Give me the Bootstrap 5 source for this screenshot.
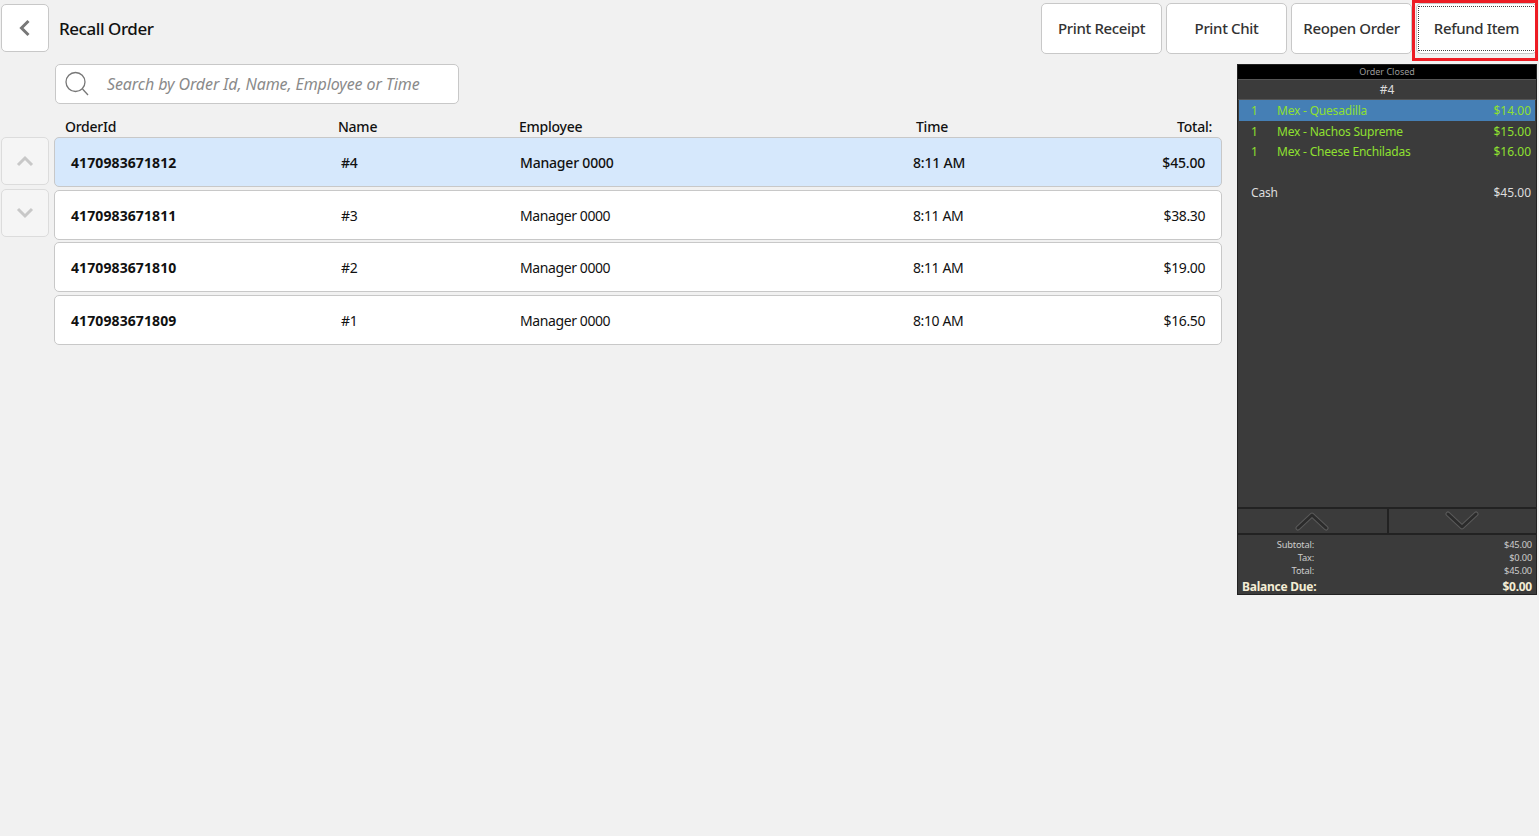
<!DOCTYPE html>
<html lang="en">
<head>
    <meta charset="UTF-8">
    <meta name="viewport" content="width=device-width, initial-scale=1.0">
    <link href="https://cdn.jsdelivr.net/npm/bootstrap@5.3.0/dist/css/bootstrap.min.css" rel="stylesheet">
    <title>Recall Order</title>
    <style>
        html, body { height: 100%; }
        body { background: #f1f1f1; font-family: "Noto Sans", "Open Sans", sans-serif; color: #111; overflow: hidden; }
        .top-bar { height: 64px; padding: 3px 2px 0 1px; }
        .tile { background: #fff; border: 1px solid #c8c8c8; border-radius: 5px; }
        .back-btn { width: 48px; height: 48px; margin-top: 1px; }
        .page-title { font-size: 17px; margin-left: 10px; margin-top: -9px; letter-spacing: -.45px; font-weight: 500; }
        .act-btn { width: 121px; height: 51px; font-size: 15px; color: #333; letter-spacing: -.35px; font-weight: 500; padding: 0 0 1px; }
        .act-btn.focused { position: relative; }
        .act-btn.focused::before { content: ""; position: absolute; inset: 2px 0 2px 1px; border: 1px dotted #444; }
        .red-box { position: absolute; left: 1412px; top: 0; width: 126px; height: 61px; border: 3px solid #ed1c24; pointer-events: none; }
        .left-side { width: 1237px; }
        .search-box { width: 404px; height: 40px; margin-left: 55px; padding-left: 8px; }
        .search-box span { font-size: 16px; font-style: italic; color: #8a8a8a; margin-left: 17px; letter-spacing: -.1px; }
        .head-row { height: 33px; margin-left: 55px; width: 1168px; font-size: 14px; padding-top: 13px; line-height: 19px; font-weight: 500; overflow: hidden; letter-spacing: -.25px; }
        .c-id { width: 283px; padding-left: 10px; }
        .c-name { width: 181px; }
        .c-emp { width: 397px; }
        .c-time { flex: 1; }
        .c-total { width: 120px; text-align: right; padding-right: 11px; }
        .rows-wrap { gap: 2.4px; width: 1168px; }
        .order-row { height: 50.2px; font-size: 14px; letter-spacing: -.4px; padding-top: 1px; }
        .order-row.picked { background: #d6e8fc; letter-spacing: -.2px; }
        .r-id { width: 286px; padding-left: 16px; font-weight: 700; letter-spacing: .1px; }
        .r-name { width: 179px; }
        .r-emp { width: 393px; }
        .r-time { flex: 1; }
        .r-total { width: 120px; text-align: right; padding-right: 16px; }
        .order-row.picked .r-name, .order-row.picked .r-emp, .order-row.picked .r-time, .order-row.picked .r-total { font-weight: 500; }
        .arrow-col { width: 48px; margin: 0 5px 0 1px; gap: 4px; }
        .arrow-btn { width: 48px; height: 48px; background: #f5f5f5; border: 1px solid #dcdcdc; border-radius: 5px; }
        .ticket { width: 300px; height: 531px; background: #3b3b3b; border: 1px solid #222; color: #ddd; font-size: 12px; }
        .tk-status { height: 14px; background: #000; color: #9a9a9a; font-size: 9px; line-height: 14px; text-align: center; }
        .tk-num { line-height: 20px; text-align: center; border-top: 1px solid #555; border-bottom: 1px solid #555; height: 21px; font-size: 12px; }
        .tk-list { height: 409px; border-bottom: 2px solid #222; border-left: 1px solid #222; border-right: 1px solid #222; margin: 0 -1px; padding: 0 1px; }
        .tk-line { height: 20.5px; line-height: 21px; color: #8fe030; padding: 0 4px 0 12px; letter-spacing: -.2px; }
        .tk-line > .ms-auto { letter-spacing: 0; }
        .tk-line.on { background: #457fb5; }
        .tk-qty { width: 26px; }
        .tk-cash { margin-top: 20px; color: #ddd; }
        .tk-pager { height: 26px; border-bottom: 2px solid #222; }
        .tk-pager > div { width: 50%; padding-right: 2px; }
        .tk-pager > div + div { border-left: 2px solid #222; }
        .tk-sums { font-size: 9.3px; padding: 3px 4px 0; line-height: 13px; color: #ccc; letter-spacing: -.2px; }
        .tk-label { width: 72px; text-align: right; }
        .tk-due { font-size: 12px; font-weight: 700; color: #f3edd5; line-height: 17px; margin-top: 1px; letter-spacing: -.25px; }
    </style>
</head>
<body>
    <div class="top-bar d-flex align-items-start">
        <button class="tile back-btn d-flex align-items-center justify-content-center p-0">
            <svg width="14" height="18" viewBox="0 0 14 18"><path d="M10.5 2 L3.5 9 L10.5 16" fill="none" stroke="#777" stroke-width="3"/></svg>
        </button>
        <div class="page-title align-self-center">Recall Order</div>
        <div class="ms-auto d-flex gap-1">
            <button class="tile act-btn">Print Receipt</button>
            <button class="tile act-btn">Print Chit</button>
            <button class="tile act-btn">Reopen Order</button>
            <button class="tile act-btn focused">Refund Item</button>
        </div>
    </div>
    <div class="red-box"></div>

    <div class="d-flex align-items-start">
        <div class="left-side">
            <div class="tile search-box d-flex align-items-center">
                <svg width="26" height="26" viewBox="0 0 26 26"><circle cx="11.5" cy="11" r="9.5" fill="none" stroke="#777" stroke-width="1.3"/><path d="M18.5 18 L24 24" stroke="#777" stroke-width="1.3"/></svg>
                <span>Search by Order Id, Name, Employee or Time</span>
            </div>
            <div class="head-row d-flex">
                <div class="c-id">OrderId</div>
                <div class="c-name">Name</div>
                <div class="c-emp">Employee</div>
                <div class="c-time">Time</div>
                <div class="c-total">Total:</div>
            </div>
            <div class="d-flex">
                <div class="arrow-col d-flex flex-column">
                    <div class="arrow-btn d-flex align-items-center justify-content-center">
                        <svg width="18" height="12" viewBox="0 0 18 12"><path d="M2 10 L9 3 L16 10" fill="none" stroke="#c8c8c8" stroke-width="3"/></svg>
                    </div>
                    <div class="arrow-btn d-flex align-items-center justify-content-center">
                        <svg width="18" height="12" viewBox="0 0 18 12"><path d="M2 2 L9 9 L16 2" fill="none" stroke="#c8c8c8" stroke-width="3"/></svg>
                    </div>
                </div>
                <div class="rows-wrap d-flex flex-column">
                    <div class="tile order-row picked d-flex align-items-center">
                        <div class="r-id">4170983671812</div><div class="r-name">#4</div><div class="r-emp">Manager 0000</div><div class="r-time">8:11 AM</div><div class="r-total">$45.00</div>
                    </div>
                    <div class="tile order-row d-flex align-items-center">
                        <div class="r-id">4170983671811</div><div class="r-name">#3</div><div class="r-emp">Manager 0000</div><div class="r-time">8:11 AM</div><div class="r-total">$38.30</div>
                    </div>
                    <div class="tile order-row d-flex align-items-center">
                        <div class="r-id">4170983671810</div><div class="r-name">#2</div><div class="r-emp">Manager 0000</div><div class="r-time">8:11 AM</div><div class="r-total">$19.00</div>
                    </div>
                    <div class="tile order-row d-flex align-items-center">
                        <div class="r-id">4170983671809</div><div class="r-name">#1</div><div class="r-emp">Manager 0000</div><div class="r-time">8:10 AM</div><div class="r-total">$16.50</div>
                    </div>
                </div>
            </div>
        </div>

        <div class="ticket">
            <div class="tk-status">Order Closed</div>
            <div class="tk-num">#4</div>
            <div class="tk-list">
                <div class="tk-line on d-flex"><div class="tk-qty">1</div><div>Mex - Quesadilla</div><div class="ms-auto">$14.00</div></div>
                <div class="tk-line d-flex"><div class="tk-qty">1</div><div>Mex - Nachos Supreme</div><div class="ms-auto">$15.00</div></div>
                <div class="tk-line d-flex"><div class="tk-qty">1</div><div>Mex - Cheese Enchiladas</div><div class="ms-auto">$16.00</div></div>
                <div class="tk-line tk-cash d-flex"><div>Cash</div><div class="ms-auto">$45.00</div></div>
            </div>
            <div class="tk-pager d-flex">
                <div class="d-flex align-items-center justify-content-center">
                    <svg width="34" height="20" viewBox="0 0 34 20"><path d="M3 17 L17 4 L31 17" fill="none" stroke="#5a5a5a" stroke-width="5" stroke-linecap="round" stroke-linejoin="round"/><path d="M3 17 L17 4 L31 17" fill="none" stroke="#2b2b2b" stroke-width="3" stroke-linecap="round" stroke-linejoin="round"/></svg>
                </div>
                <div class="d-flex align-items-center justify-content-center">
                    <svg width="34" height="20" viewBox="0 0 34 20"><path d="M3 3 L17 16 L31 3" fill="none" stroke="#5a5a5a" stroke-width="5" stroke-linecap="round" stroke-linejoin="round"/><path d="M3 3 L17 16 L31 3" fill="none" stroke="#2b2b2b" stroke-width="3" stroke-linecap="round" stroke-linejoin="round"/></svg>
                </div>
            </div>
            <div class="tk-sums">
                <div class="d-flex"><div class="tk-label">Subtotal:</div><div class="ms-auto">$45.00</div></div>
                <div class="d-flex"><div class="tk-label">Tax:</div><div class="ms-auto">$0.00</div></div>
                <div class="d-flex"><div class="tk-label">Total:</div><div class="ms-auto">$45.00</div></div>
                <div class="tk-due d-flex"><div>Balance Due:</div><div class="ms-auto">$0.00</div></div>
            </div>
        </div>
    </div>
    <script src="https://cdn.jsdelivr.net/npm/bootstrap@5.3.0/dist/js/bootstrap.bundle.min.js"></script>
</body>
</html>
